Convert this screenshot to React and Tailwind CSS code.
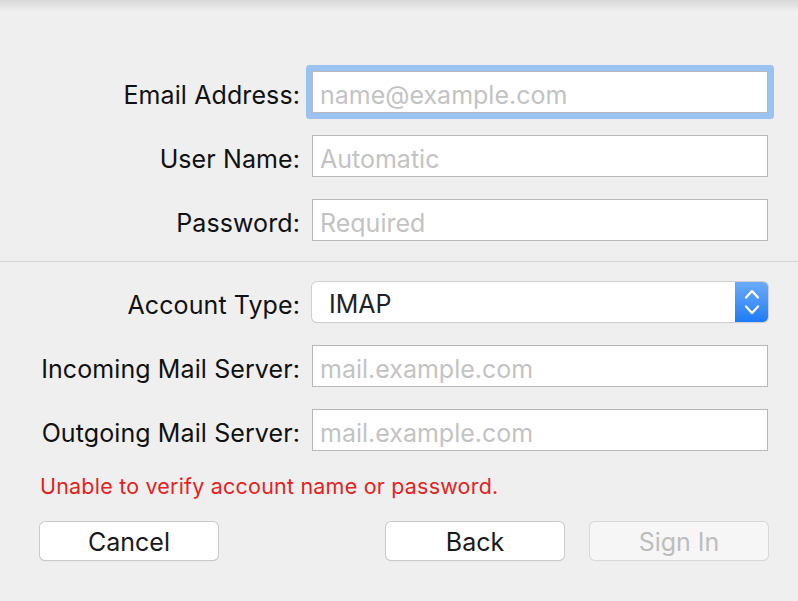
export default function App() {
  const font = { fontFamily: 'Inter, "Liberation Sans", sans-serif' };
  const Label = ({ children }) => (
    <div className="h-[42px] flex items-center justify-end pt-[6px] leading-[30px] text-[25px] text-[#111] tracking-[0.1px]">{children}</div>
  );
  const Field = ({ placeholder, focus }) => (
    <div
      className={
        "h-[42px] bg-white border border-[#b9b9b9] flex items-center pl-[7px] pt-[5px] leading-[30px] text-[25px] text-[#c3c3c3] " +
        (focus ? "rounded-[1px] shadow-[0_0_0_6px_#9ac3f2]" : "")
      }
    >
      {placeholder}
    </div>
  );
  return (
    <div className="w-[798px] h-[601px] bg-[#efefef] overflow-hidden" style={font}>
      <div className="h-[12px] bg-gradient-to-b from-[#d9d9d9] to-[#efefef]" />
      <div className="pt-[59px] grid grid-cols-[300px_456px] gap-x-[12px] gap-y-[22px]">
        <Label>Email Address:</Label>
        <Field placeholder="name@example.com" focus />
        <Label>User Name:</Label>
        <Field placeholder="Automatic" />
        <Label>Password:</Label>
        <Field placeholder="Required" />
      </div>
      <div className="mt-[20px] h-[1px] bg-[#d5d5d5]" />
      <div className="pt-[20px] grid grid-cols-[300px_456px] gap-x-[12px]">
        <div className="h-[40px] flex items-center justify-end pt-[6px] leading-[30px] text-[25px] text-[#111] tracking-[0.1px]">Account Type:</div>
        <div className="h-[40px] bg-white rounded-[5px] flex shadow-[0_0_0_1px_#cfcfcf,0_1px_1px_rgba(0,0,0,0.15)] overflow-hidden">
          <div className="flex-1 flex items-center pl-[17px] pt-[4px] leading-[30px] text-[25px] text-[#222]">IMAP</div>
          <div className="w-[33px] h-full bg-gradient-to-b from-[#6aaafa] to-[#1b7bf6] flex items-center justify-center">
            <svg width="16" height="28" viewBox="0 0 16 28" fill="none" stroke="white" strokeWidth="2.3" strokeLinecap="round" strokeLinejoin="round">
              <path d="M2 9.5 L8 3 L14 9.5" />
              <path d="M2 18.5 L8 25 L14 18.5" />
            </svg>
          </div>
        </div>
      </div>
      <div className="pt-[23px] grid grid-cols-[300px_456px] gap-x-[12px] gap-y-[22px]">
        <Label>Incoming Mail Server:</Label>
        <Field placeholder="mail.example.com" />
        <Label>Outgoing Mail Server:</Label>
        <Field placeholder="mail.example.com" />
      </div>
      <div className="mt-[23px] pl-[40px] h-[24px] flex items-center leading-[24px] text-[21.5px] text-[#e5221d] tracking-[0.2px]">
        Unable to verify account name or password.
      </div>
      <div className="mt-[24px] flex pl-[40px] pr-[30px]">
        <button className="w-[178px] h-[38px] bg-white rounded-[5px] shadow-[0_0_0_1px_#cacaca,0_1px_1px_rgba(0,0,0,0.2)] pt-[2px] leading-[30px] text-[25px] text-[#1a1a1a]">
          Cancel
        </button>
        <div className="flex-1" />
        <button className="w-[178px] h-[38px] bg-white rounded-[5px] shadow-[0_0_0_1px_#cacaca,0_1px_1px_rgba(0,0,0,0.2)] pt-[2px] leading-[30px] text-[25px] text-[#1a1a1a]">
          Back
        </button>
        <button className="ml-[26px] w-[178px] h-[38px] bg-[#f6f6f6] rounded-[5px] shadow-[0_0_0_1px_#d8d8d8,0_1px_1px_rgba(0,0,0,0.08)] pt-[2px] leading-[30px] text-[25px] text-[#bdbdbd]">
          Sign In
        </button>
      </div>
    </div>
  );
}
